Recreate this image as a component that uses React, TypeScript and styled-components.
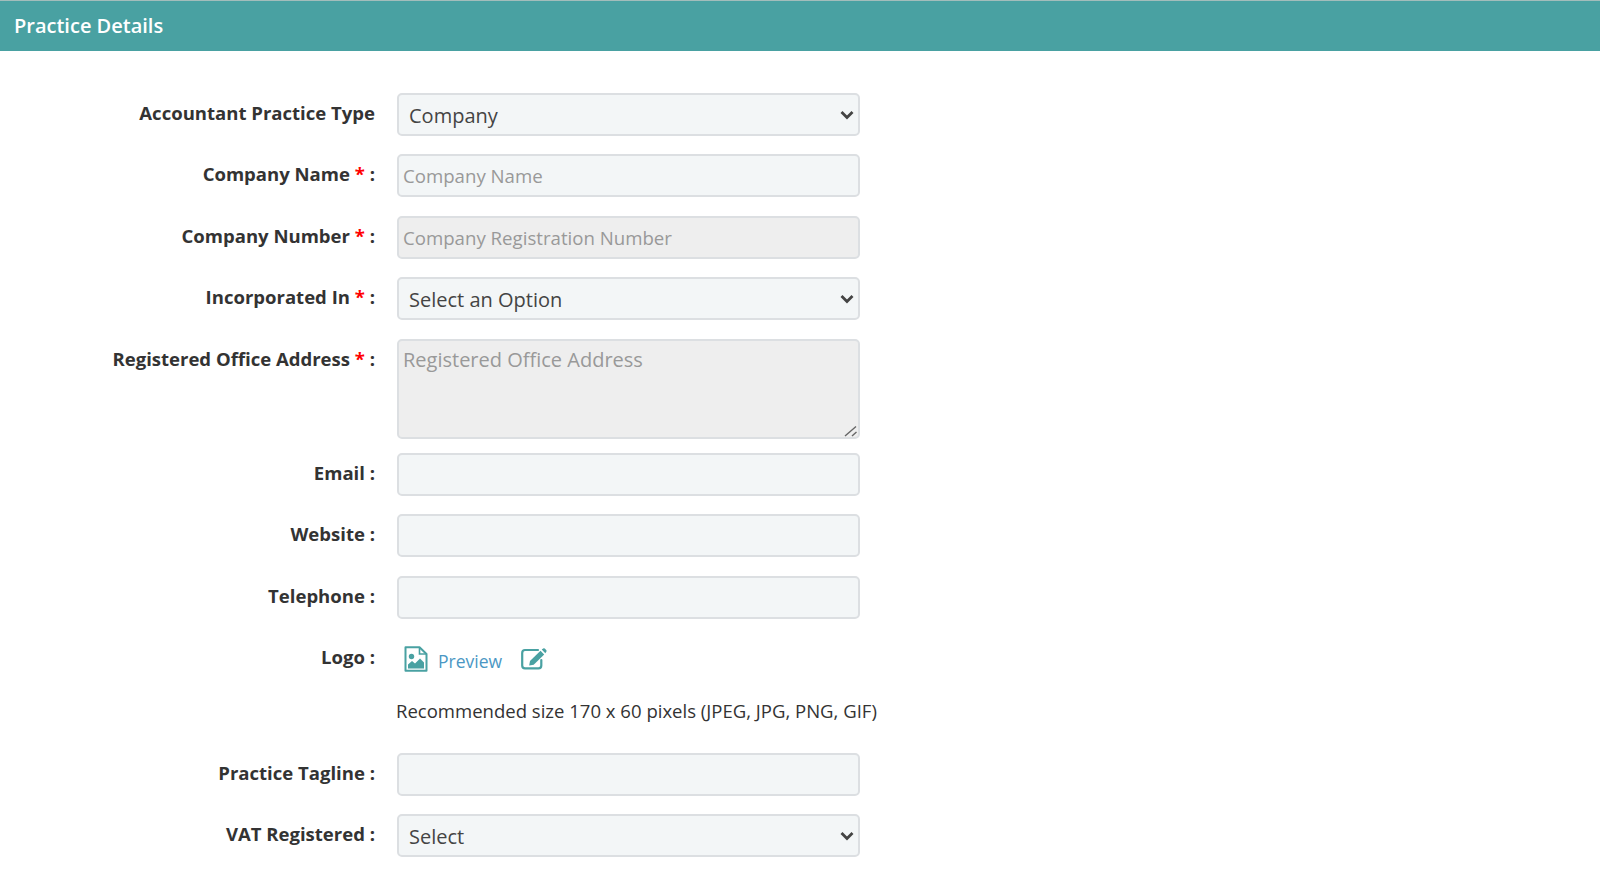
import React from 'react';
import styled, { createGlobalStyle } from 'styled-components';

const GlobalStyle = createGlobalStyle`
  html, body { margin: 0; padding: 0; background: #fff; }
  body { font-family: "Open Sans", "Liberation Sans", sans-serif; color: #333; overflow: hidden; }
`;

const chevron =
  "url(\"data:image/svg+xml,%3Csvg xmlns='http://www.w3.org/2000/svg' width='14' height='10' viewBox='0 0 14 10'%3E%3Cpath d='M1.5 2 L7 7.5 L12.5 2' fill='none' stroke='%23444' stroke-width='2.8'/%3E%3C/svg%3E\")";

const Header = styled.div`
  height: 50px;
  border-top: 1px solid #a3bdbb;
  background: #49a1a2;
  color: #fff;
  font-size: 20px;
  font-weight: 600;
  line-height: 50px;
  padding-left: 14px;
`;

const Form = styled.form`
  display: flex;
  flex-direction: column;
  gap: 18.4px;
  padding-top: 42px;
`;

const Row = styled.div<{ $after?: number }>`
  display: grid;
  grid-template-columns: 375px 463px;
  column-gap: 22px;
  align-items: start;
  margin-bottom: ${p => p.$after ?? 0}px;
`;

const Label = styled.label`
  font-size: 18.55px;
  font-weight: 700;
  line-height: 24px;
  text-align: right;
  padding-top: 8px;
  white-space: nowrap;
`;

const Required = styled.span`
  color: #f00;
`;

const fieldStyles = `
  box-sizing: border-box;
  width: 463px;
  border: 2px solid #dcdfe2;
  border-radius: 5px;
  font-family: "Open Sans", "Liberation Sans", sans-serif;
  outline: none;
  &::placeholder { color: #999; opacity: 1; }
`;

const Select = styled.select`
  ${fieldStyles}
  appearance: none;
  height: 43px;
  font-size: 20px;
  background: #f3f6f7 ${chevron} no-repeat right 4px center;
  color: #444;
  padding: 2px 6px 0 10px;
`;

const Input = styled.input<{ $locked?: boolean }>`
  ${fieldStyles}
  height: 43px;
  font-size: 18.65px;
  background: ${p => (p.$locked ? '#eeeeee' : '#f3f6f7')};
  padding: 0 5px 0 4px;
`;

const TextAreaWrap = styled.div`
  position: relative;
  height: 100px;
`;

const TextArea = styled.textarea`
  ${fieldStyles}
  display: block;
  height: 100px;
  font-size: 20px;
  background: #eeeeee;
  padding: 5px 5px 5px 4px;
  resize: none;
`;

const Grip = styled.svg`
  position: absolute;
  right: 2px;
  bottom: 2px;
  color: #666;
`;

const LogoCell = styled.div`
  display: flex;
  align-items: center;
  height: 36px;
  padding: 4px 0 0 7px;
  color: #49a1a2;
`;

const PreviewLink = styled.a`
  color: #4b97c4;
  font-size: 17.5px;
  margin: 3px 19px 0 10px;
`;

const Hint = styled.div`
  font-size: 18.55px;
  line-height: 24px;
  margin-left: -1px;
  white-space: nowrap;
`;

const FileImageIcon = () => (
  <svg width="24" height="26" viewBox="0 0 24 26">
    <path d="M2.5 1.2 H15.5 L22.5 8 V24.8 H1.5 V1.2 Z" fill="none" stroke="currentColor" strokeWidth="2" strokeLinejoin="round" />
    <path d="M15.5 1.2 V8 H22.5" fill="none" stroke="currentColor" strokeWidth="1.6" />
    <circle cx="7.5" cy="10.5" r="2.7" fill="currentColor" />
    <path d="M4 22.5 V18.5 L8 15 L11 17.5 L16 12.5 L20 16.5 V22.5 Z" fill="currentColor" />
  </svg>
);

const EditIcon = () => (
  <svg width="26" height="22" viewBox="0 0 26 22">
    <path d="M17 2 H4 Q1.2 2 1.2 5 V17.5 Q1.2 20.3 4 20.3 H17.5 Q20.3 20.3 20.3 17.5 V12" fill="none" stroke="currentColor" strokeWidth="2.2" strokeLinecap="round" />
    <path d="M9 13 L19.5 2.8 L23.2 6.4 L12.7 16.8 L8.2 17.6 Z" fill="currentColor" />
    <path d="M20.7 1.6 L22.2 0.4 Q23 0 23.8 0.6 L25.4 2.2 Q25.9 3 25.3 3.8 L24.3 5.2 Z" fill="currentColor" />
  </svg>
);

export default function App() {
  return (
    <>
      <GlobalStyle />
      <Header>Practice Details</Header>
      <Form>
        <Row>
          <Label>Accountant Practice Type</Label>
          <Select defaultValue="Company"><option>Company</option></Select>
        </Row>
        <Row>
          <Label>Company Name <Required>*</Required> :</Label>
          <Input placeholder="Company Name" />
        </Row>
        <Row>
          <Label>Company Number <Required>*</Required> :</Label>
          <Input $locked placeholder="Company Registration Number" />
        </Row>
        <Row>
          <Label>Incorporated In <Required>*</Required> :</Label>
          <Select><option>Select an Option</option></Select>
        </Row>
        <Row $after={-4}>
          <Label>Registered Office Address <Required>*</Required> :</Label>
          <TextAreaWrap>
            <TextArea placeholder="Registered Office Address" />
            <Grip width="14" height="12" viewBox="0 0 14 12">
              <path d="M1 11 L12 1.5 M8 11 L12.5 7" fill="none" stroke="currentColor" strokeWidth="1.4" />
            </Grip>
          </TextAreaWrap>
        </Row>
        <Row>
          <Label>Email :</Label>
          <Input />
        </Row>
        <Row>
          <Label>Website :</Label>
          <Input />
        </Row>
        <Row>
          <Label>Telephone :</Label>
          <Input />
        </Row>
        <Row $after={3}>
          <Label>Logo :</Label>
          <LogoCell>
            <FileImageIcon />
            <PreviewLink>Preview</PreviewLink>
            <EditIcon />
          </LogoCell>
        </Row>
        <Row $after={12}>
          <span />
          <Hint>Recommended size 170 x 60 pixels (JPEG, JPG, PNG, GIF)</Hint>
        </Row>
        <Row>
          <Label>Practice Tagline :</Label>
          <Input />
        </Row>
        <Row>
          <Label>VAT Registered :</Label>
          <Select><option>Select</option></Select>
        </Row>
      </Form>
    </>
  );
}
